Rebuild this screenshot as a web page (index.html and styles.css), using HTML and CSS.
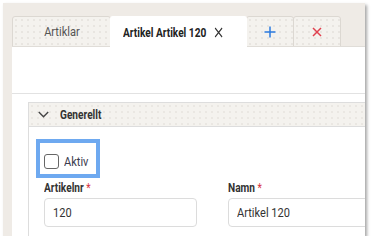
FILE: index.html
```html
<!DOCTYPE html>
<html>
    <head>
        <link rel="stylesheet" href="styles.css">
    </head>
    <body>
        <div class="frame">
            <!-- tab strip -->
            <div class="tabs">
                <div class="tab"><span class="narrow mid">Artiklar</span></div>
                <div class="tab active">
                    <span class="narrow mid tight tab-title">
                        <span>Artikel Artikel 120</span>
                        <svg width="11" height="11" viewBox="0 0 11 11"><path d="M1 1L10 10M10 1L1 10" stroke="#333" stroke-width="1.4" fill="none"/></svg>
                    </span>
                </div>
                <div class="tab small">
                    <svg width="12" height="12" viewBox="0 0 12 12"><path d="M6 0.5V11.5M0.5 6H11.5" stroke="#2b7be0" stroke-width="1.5" fill="none"/></svg>
                </div>
                <div class="tab small">
                    <svg width="10" height="10" viewBox="0 0 10 10"><path d="M1 1L9 9M9 1L1 9" stroke="#e0414f" stroke-width="1.5" fill="none"/></svg>
                </div>
            </div>
            <div class="page">
                <div class="toolbar"></div>
                <div class="content">
                    <div class="panel">
                        <div class="panel-header">
                            <svg width="11" height="7" viewBox="0 0 11 7"><path d="M0.8 1L5.5 5.7L10.2 1" stroke="#444" stroke-width="1.4" fill="none"/></svg>
                            <span class="narrow bold">Generellt</span>
                        </div>
                        <div class="panel-body">
                            <label class="check-row">
                                <span class="checkbox"></span>
                                <span class="narrow">Aktiv</span>
                            </label>
                            <div class="fields">
                                <div class="field">
                                    <div class="field-label"><span class="narrow bold">Artikelnr <span class="req">*</span></span></div>
                                    <div class="input"><span class="narrow">120</span></div>
                                </div>
                                <div class="field">
                                    <div class="field-label"><span class="narrow bold">Namn <span class="req">*</span></span></div>
                                    <div class="input"><span class="narrow">Artikel 120</span></div>
                                </div>
                            </div>
                        </div>
                    </div>
                </div>
            </div>
        </div>
    </body>
</html>
```

FILE: styles.css
```css
body {
    margin: 0;
    background: #fff;
    font-family: "Roboto", sans-serif;
    font-size: 13px;
    color: #333;
}
/* no condensed face installed, so squeeze the text */
.narrow {
    display: inline-block;
    white-space: nowrap;
    transform: scaleX(0.85);
    transform-origin: left center;
}
.narrow.bold {
    transform: scaleX(0.81);
}
.narrow.mid {
    transform-origin: center center;
}
.narrow.tight {
    transform: scaleX(0.78);
}
.frame {
    margin: 3px 0 0 3px;
    width: 353px;
    height: 220px;
    padding: 13px 0 0 9px;
    background: #efebe6;
    box-shadow: 2px 2px 3px rgba(0, 0, 0, 0.35);
    display: flex;
    flex-direction: column;
    overflow: hidden;
}
.tabs {
    display: flex;
    height: 31px;
    flex-shrink: 0;
}
.tab {
    width: 99px;
    box-sizing: border-box;
    display: flex;
    align-items: center;
    justify-content: center;
    border: 1px solid #dcd8d2;
    border-radius: 3px 3px 0 0;
    margin-right: -1px;
    color: #555;
    background-color: #f4f2ee;
    background-image: radial-gradient(#dcd8d2 0.5px, transparent 0.9px);
    background-size: 6px 6px;
}
.tab.active {
    width: 137px;
    background: #fff;
    border-color: #fff;
    border-bottom: none;
    font-weight: bold;
    color: #222;
    position: relative;
    z-index: 1;
    padding-right: 11px;
}
.tab-title {
    display: inline-flex;
    align-items: center;
    gap: 10px;
}
.tab.small {
    width: 48px;
}
.page {
    flex: 1;
    background: #fff;
    border-top: 1px solid #e0ddd8;
    margin-top: -1px;
}
.toolbar {
    height: 46px;
    border-bottom: 1px solid #e2e2e2;
}
.content {
    padding: 8px 0 0 16px;
}
.panel {
    border: 1px solid #dddddd;
    border-right: none;
    height: 200px;
}
.panel-header {
    height: 23px;
    display: flex;
    align-items: center;
    gap: 11px;
    padding-left: 9px;
    font-weight: bold;
    font-size: 12.5px;
    color: #333;
    border-bottom: 1px solid #dddddd;
    background-color: #f4f2ee;
    background-image: radial-gradient(#e0dcd6 0.5px, transparent 0.9px);
    background-size: 6px 6px;
}
.panel-body {
    padding: 16px 0 0 15px;
}
.check-row {
    display: inline-flex;
    align-items: center;
    gap: 5px;
    height: 31px;
    box-sizing: border-box;
    padding: 5px 4px 0 4px;
    margin-left: -4px;
    width: 56px;
    outline: 4px solid #6ea9f0;
    color: #3a3b4d;
}
.checkbox {
    width: 15px;
    height: 15px;
    flex-shrink: 0;
    box-sizing: border-box;
    border: 1.5px solid #666;
    border-radius: 3px;
    background: #fff;
}
.fields {
    display: grid;
    grid-template-columns: 153px 153px;
    column-gap: 31px;
    margin-top: 6px;
}
.field-label {
    font-weight: bold;
    font-size: 12.5px;
    color: #333;
    margin-bottom: 3px;
}
.req {
    color: #d9343f;
    font-weight: normal;
}
.input {
    height: 29px;
    box-sizing: border-box;
    border: 1px solid #dcdcdc;
    border-radius: 4px;
    padding: 0 8px;
    display: flex;
    align-items: center;
    color: #333;
}
```
